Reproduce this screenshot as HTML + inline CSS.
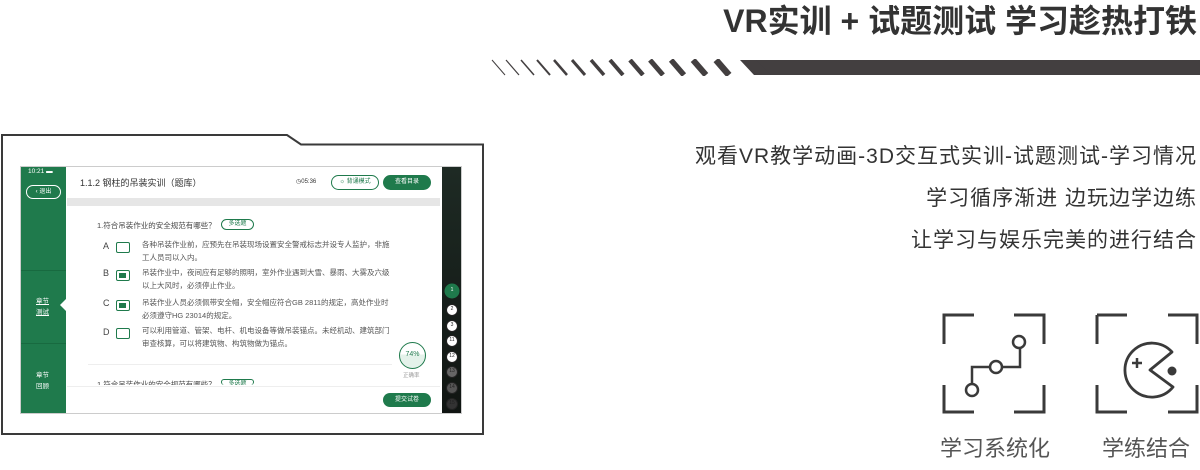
<!DOCTYPE html>
<html><head><meta charset="utf-8"><style>
*{margin:0;padding:0;box-sizing:border-box}
body{width:1200px;height:470px;background:#fff;position:relative;overflow:hidden;font-family:"Liberation Sans","Noto Sans CJK SC",sans-serif;color:#333}
.a{position:absolute;white-space:nowrap}
.t{font-size:7.5px;color:#555;line-height:12.5px}
.btn{position:absolute;border-radius:8px;font-size:6px;text-align:center;line-height:13px}
.pg{position:absolute;left:446px;width:12px;height:12px;border-radius:50%;background:#fff;border:1.5px solid #222;font-size:5px;text-align:center;line-height:9px;color:#222}
.box{position:absolute;left:116px;width:14px;height:11px;border:1.5px solid #1f7a4c;border-radius:2px}
.box.f::after{content:"";position:absolute;left:2px;top:1.5px;width:7px;height:5px;background:#1f7a4c}
.opt{position:absolute;left:103px;font-size:9px;color:#444}
</style></head><body>
<div class="a" style="right:3px;top:-4px;font-size:32px;font-weight:bold;color:#333;letter-spacing:0px">VR实训 + 试题测试 学习趁热打铁</div>
<svg class="a" style="left:488px;top:59px" width="712" height="17">
<rect x="268" y="1" width="444" height="15" fill="#433f40"/>
<g stroke="#433f40" fill="none">
<line x1="4" y1="1" x2="17" y2="16" stroke-width="1"/>
<line x1="18" y1="1" x2="31" y2="16" stroke-width="1.2"/>
<line x1="33" y1="1" x2="46" y2="16" stroke-width="1.5"/>
<line x1="49" y1="1" x2="62" y2="16" stroke-width="2"/>
<line x1="66" y1="1" x2="79" y2="16" stroke-width="2.5"/>
<line x1="84" y1="1" x2="97" y2="16" stroke-width="3"/>
<line x1="103" y1="1" x2="116" y2="16" stroke-width="3.5"/>
<line x1="122" y1="1" x2="135" y2="16" stroke-width="4"/>
<line x1="142" y1="1" x2="155" y2="16" stroke-width="4.5"/>
<line x1="162" y1="1" x2="175" y2="16" stroke-width="5"/>
<line x1="183" y1="1" x2="196" y2="16" stroke-width="5.5"/>
<line x1="205" y1="1" x2="218" y2="16" stroke-width="6"/>
<line x1="228" y1="1" x2="241" y2="16" stroke-width="6.5"/>
</g>
<polygon points="252,1 268,1 283,16 266,16" fill="#433f40"/>
</svg>

<svg class="a" style="left:0;top:0" width="490" height="440">
<polygon points="2,135 287,135 301,144.5 483,144.5 483,434 2,434" fill="none" stroke="#3a3a3a" stroke-width="2"/>
</svg>
<div class="a" style="left:20px;top:166px;width:442px;height:248px;border:1px solid #ccc;background:#fff"></div>
<div class="a" style="left:21px;top:167px;width:45px;height:246px;background:#1f7a4c"></div>
<div class="a" style="left:21px;top:270px;width:45px;height:1px;background:#186a40"></div>
<div class="a" style="left:21px;top:343px;width:45px;height:1px;background:#186a40"></div>
<div class="a" style="left:60px;top:299px;width:0;height:0;border-top:6px solid transparent;border-bottom:6px solid transparent;border-right:6px solid #fff"></div>
<div class="a" style="left:28px;top:168px;font-size:6.5px;color:#fff">10:21 ▬</div>
<div class="a" style="left:26px;top:185px;width:35px;height:14px;border:1px solid #fff;border-radius:7px;color:#fff;font-size:6px;text-align:center;line-height:12px">‹ 退出</div>
<div class="a" style="left:36px;top:296px;font-size:6.5px;color:#fff;line-height:11px;text-decoration:underline">章节<br>测试</div>
<div class="a" style="left:36px;top:370px;font-size:6.5px;color:#fff;line-height:11px">章节<br>回顾</div>
<div class="a" style="left:442px;top:167px;width:19px;height:246px;background:linear-gradient(#1e2a24,#101512)"></div>
<div class="a" style="left:80px;top:176px;font-size:9px;color:#333">1.1.2 钢柱的吊装实训（题库）</div>
<div class="a" style="left:296px;top:178px;font-size:6px;color:#333">◷05:36</div>
<div class="btn" style="left:331px;top:175px;width:48px;height:15px;border:1px solid #1f7a4c;color:#1f7a4c">☼ 背诵模式</div>
<div class="btn" style="left:383px;top:175px;width:48px;height:15px;background:#1f7a4c;color:#fff;line-height:15px">查看目录</div>
<div class="a" style="left:67px;top:198px;width:373px;height:8px;background:#e6e6e6"></div>
<div class="a" style="left:97px;top:220px;font-size:7.5px;color:#444">1.符合吊装作业的安全规范有哪些？</div>
<div class="btn" style="left:221px;top:219px;width:33px;height:11px;border:1px solid #1f7a4c;color:#1f7a4c;line-height:9px">多选题</div>
<div class="opt" style="top:241px">A</div><div class="box" style="top:242px"></div>
<div class="a t" style="left:142px;top:239px">各种吊装作业前，应预先在吊装现场设置安全警戒标志并设专人监护，非施<br>工人员司以入内。</div>
<div class="opt" style="top:268px">B</div><div class="box f" style="top:270px"></div>
<div class="a t" style="left:142px;top:267px">吊装作业中，夜间应有足够的照明，室外作业遇到大雪、暴雨、大雾及六级<br>以上大风时，必须停止作业。</div>
<div class="opt" style="top:298px">C</div><div class="box f" style="top:300px"></div>
<div class="a t" style="left:142px;top:297px">吊装作业人员必须佩带安全帽，安全帽应符合GB 2811的规定，高处作业时<br>必须遵守HG 23014的规定。</div>
<div class="opt" style="top:327px">D</div><div class="box" style="top:328px"></div>
<div class="a t" style="left:142px;top:325px">可以利用管道、管架、电杆、机电设备等做吊装锚点。未经机动、建筑部门<br>审查核算，可以将建筑物、构筑物做为锚点。</div>
<div class="a" style="left:88px;top:364px;width:304px;height:1px;background:#eee"></div>
<div class="a" style="left:399px;top:342px;width:27px;height:27px;border:1.5px solid #1f7a4c;border-radius:50%;background:linear-gradient(#fff 45%,#e4f2ea 45%);font-size:7px;color:#1f7a4c;text-align:center;line-height:24px">74%</div>
<div class="a" style="left:403px;top:371px;font-size:5.5px;color:#999">正确率</div>
<div class="a" style="left:97px;top:379px;font-size:7.5px;color:#444;height:6px;overflow:hidden">1.符合吊装作业的安全规范有哪些？</div>
<div class="btn" style="left:221px;top:379px;width:33px;height:6px;border:1px solid #1f7a4c;border-bottom:none;overflow:hidden;color:#1f7a4c;line-height:9px">多选题</div>
<div class="a" style="left:67px;top:386px;width:373px;height:1px;background:#eee"></div>
<div class="btn" style="left:383px;top:393px;width:48px;height:14px;background:#1f7a4c;color:#fff;line-height:14px">提交试卷</div>
<div class="pg" style="top:285px;border-color:#1f7a4c;background:#1f7a4c;color:#fff;box-shadow:0 0 0 1.5px #1f7a4c">1</div>
<div class="pg" style="top:304px">2</div>
<div class="pg" style="top:320px">3</div>
<div class="pg" style="top:335px">11</div>
<div class="pg" style="top:351px">12</div>
<div class="pg" style="top:366px;background:#666">13</div>
<div class="pg" style="top:382px;background:#555">14</div>
<div class="pg" style="top:398px;background:#333">15</div>

<div class="a" style="right:3px;top:136px;font-size:21px;letter-spacing:1px;color:#333;text-align:right;line-height:42px">观看VR教学动画-3D交互式实训-试题测试-学习情况<br>学习循序渐进 边玩边学边练<br>让学习与娱乐完美的进行结合</div>

<svg class="a" style="left:930px;top:305px" width="270" height="115" fill="none" stroke="#3a3a3a" stroke-width="3">
<path d="M14 39V10H44M84 10H114V39M14 80V107H44M84 107H114V80"/>
<path d="M42 80V62H60M72 62H90V43" stroke-width="2.5"/>
<circle cx="42" cy="85" r="6" stroke-width="2.5"/>
<circle cx="66" cy="62" r="6" stroke-width="2.5"/>
<circle cx="89" cy="37" r="6" stroke-width="2.5"/>
<path d="M167 10H197M238 10H267V39M167 39V10M167 80V107H197M238 107H267V80"/>
<path d="M242 47A27 27 0 1 0 243 82L220 65Z" stroke-width="2.8" stroke-linejoin="round"/>
<path d="M207 53V63M202 58H212" stroke-width="2.5"/>
<circle cx="242" cy="66" r="4.5" fill="#3a3a3a" stroke="none"/>
</svg>
<div class="a" style="left:940px;top:431px;font-size:22px;color:#555">学习系统化</div>
<div class="a" style="left:1102px;top:431px;font-size:22px;color:#555">学练结合</div>
</body></html>
